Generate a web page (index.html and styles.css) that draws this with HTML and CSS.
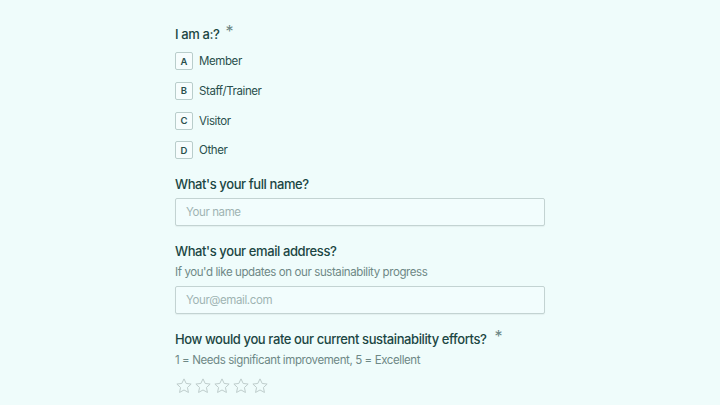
FILE: index.html
```html
<!DOCTYPE html>
<html>
<head>
<meta charset="utf-8">
<link rel="stylesheet" href="styles.css">
</head>
<body>
<main class="form">
  <section class="q q-first">
    <h2 class="label">I am a:? <span class="req">*</span></h2>
    <div class="options">
      <div class="opt"><span class="key">A</span><span>Member</span></div>
      <div class="opt"><span class="key">B</span><span>Staff/Trainer</span></div>
      <div class="opt"><span class="key">C</span><span>Visitor</span></div>
      <div class="opt"><span class="key">D</span><span>Other</span></div>
    </div>
  </section>
  <section class="q">
    <h2 class="label">What's your full name?</h2>
    <div class="input">Your name</div>
  </section>
  <section class="q">
    <h2 class="label">What's your email address?</h2>
    <p class="help">If you'd like updates on our sustainability progress</p>
    <div class="input input-after-help">Your@email.com</div>
  </section>
  <section class="q">
    <h2 class="label">How would you rate our current sustainability efforts? <span class="req req-wide">*</span></h2>
    <p class="help">1 = Needs significant improvement, 5 = Excellent</p>
    <div class="stars">
      <svg viewBox="0 0 24 24"><path d="M12 2.5l2.9 6.1 6.6.8-4.9 4.6 1.3 6.6L12 17.3l-5.9 3.3 1.3-6.6-4.9-4.6 6.6-.8z"/></svg>
      <svg viewBox="0 0 24 24"><path d="M12 2.5l2.9 6.1 6.6.8-4.9 4.6 1.3 6.6L12 17.3l-5.9 3.3 1.3-6.6-4.9-4.6 6.6-.8z"/></svg>
      <svg viewBox="0 0 24 24"><path d="M12 2.5l2.9 6.1 6.6.8-4.9 4.6 1.3 6.6L12 17.3l-5.9 3.3 1.3-6.6-4.9-4.6 6.6-.8z"/></svg>
      <svg viewBox="0 0 24 24"><path d="M12 2.5l2.9 6.1 6.6.8-4.9 4.6 1.3 6.6L12 17.3l-5.9 3.3 1.3-6.6-4.9-4.6 6.6-.8z"/></svg>
      <svg viewBox="0 0 24 24"><path d="M12 2.5l2.9 6.1 6.6.8-4.9 4.6 1.3 6.6L12 17.3l-5.9 3.3 1.3-6.6-4.9-4.6 6.6-.8z"/></svg>
    </div>
  </section>
</main>
</body>
</html>
```
FILE: styles.css
```css
html, body {
  margin: 0;
  padding: 0;
  background: #effcfb;
  font-family: Inter, "Noto Sans", sans-serif;
  color: #1d4845;
  letter-spacing: -0.025em;
}
.form {
  width: 370px;
  margin-left: 175px;
  padding-top: 24px;
  display: flex;
  flex-direction: column;
}
.q {
  display: flex;
  flex-direction: column;
  margin-top: 15px;
}
.q-first { margin-top: 0; }
.label {
  margin: 0;
  font-size: 13px;
  font-weight: 500;
  line-height: 20px;
  color: #1b4643;
}
.req {
  color: #6b8583;
  font-weight: 400;
  font-size: 16px;
  line-height: 0;
  position: relative;
  top: -2px;
  margin-left: 3px;
}
.req-wide { margin-left: 5px; }
.options {
  display: flex;
  flex-direction: column;
  gap: 11.8px;
  margin-top: 8px;
}
.opt {
  display: flex;
  align-items: center;
  gap: 6px;
  font-size: 11.5px;
  color: #2a4f4c;
  height: 18px;
}
.key {
  width: 16px;
  height: 16px;
  border: 1px solid #b9cdcb;
  border-radius: 2px;
  background: #f6fdfd;
  display: flex;
  align-items: center;
  justify-content: center;
  font-size: 9.5px;
  font-weight: 600;
  letter-spacing: 0;
  color: #2a4f4c;
}
.input {
  margin-top: 4px;
  height: 26px;
  border: 1px solid #c3d3d2;
  border-radius: 2px;
  background: #f2fdfd;
  box-shadow: 0 1px 1px rgba(0,0,0,0.05);
  display: flex;
  align-items: center;
  padding-left: 10px;
  font-size: 11.5px;
  color: #9fb4b3;
}
.input-after-help { margin-top: 6px; }
.help {
  margin: 3px 0 0;
  font-size: 11.5px;
  line-height: 16px;
  color: #6e8886;
}
.stars {
  display: flex;
  gap: 1px;
  margin-top: 9px;
}
.stars svg {
  width: 18px;
  height: 18px;
  fill: none;
  stroke: #bccbca;
  stroke-width: 1.3;
  stroke-linejoin: round;
}
```
